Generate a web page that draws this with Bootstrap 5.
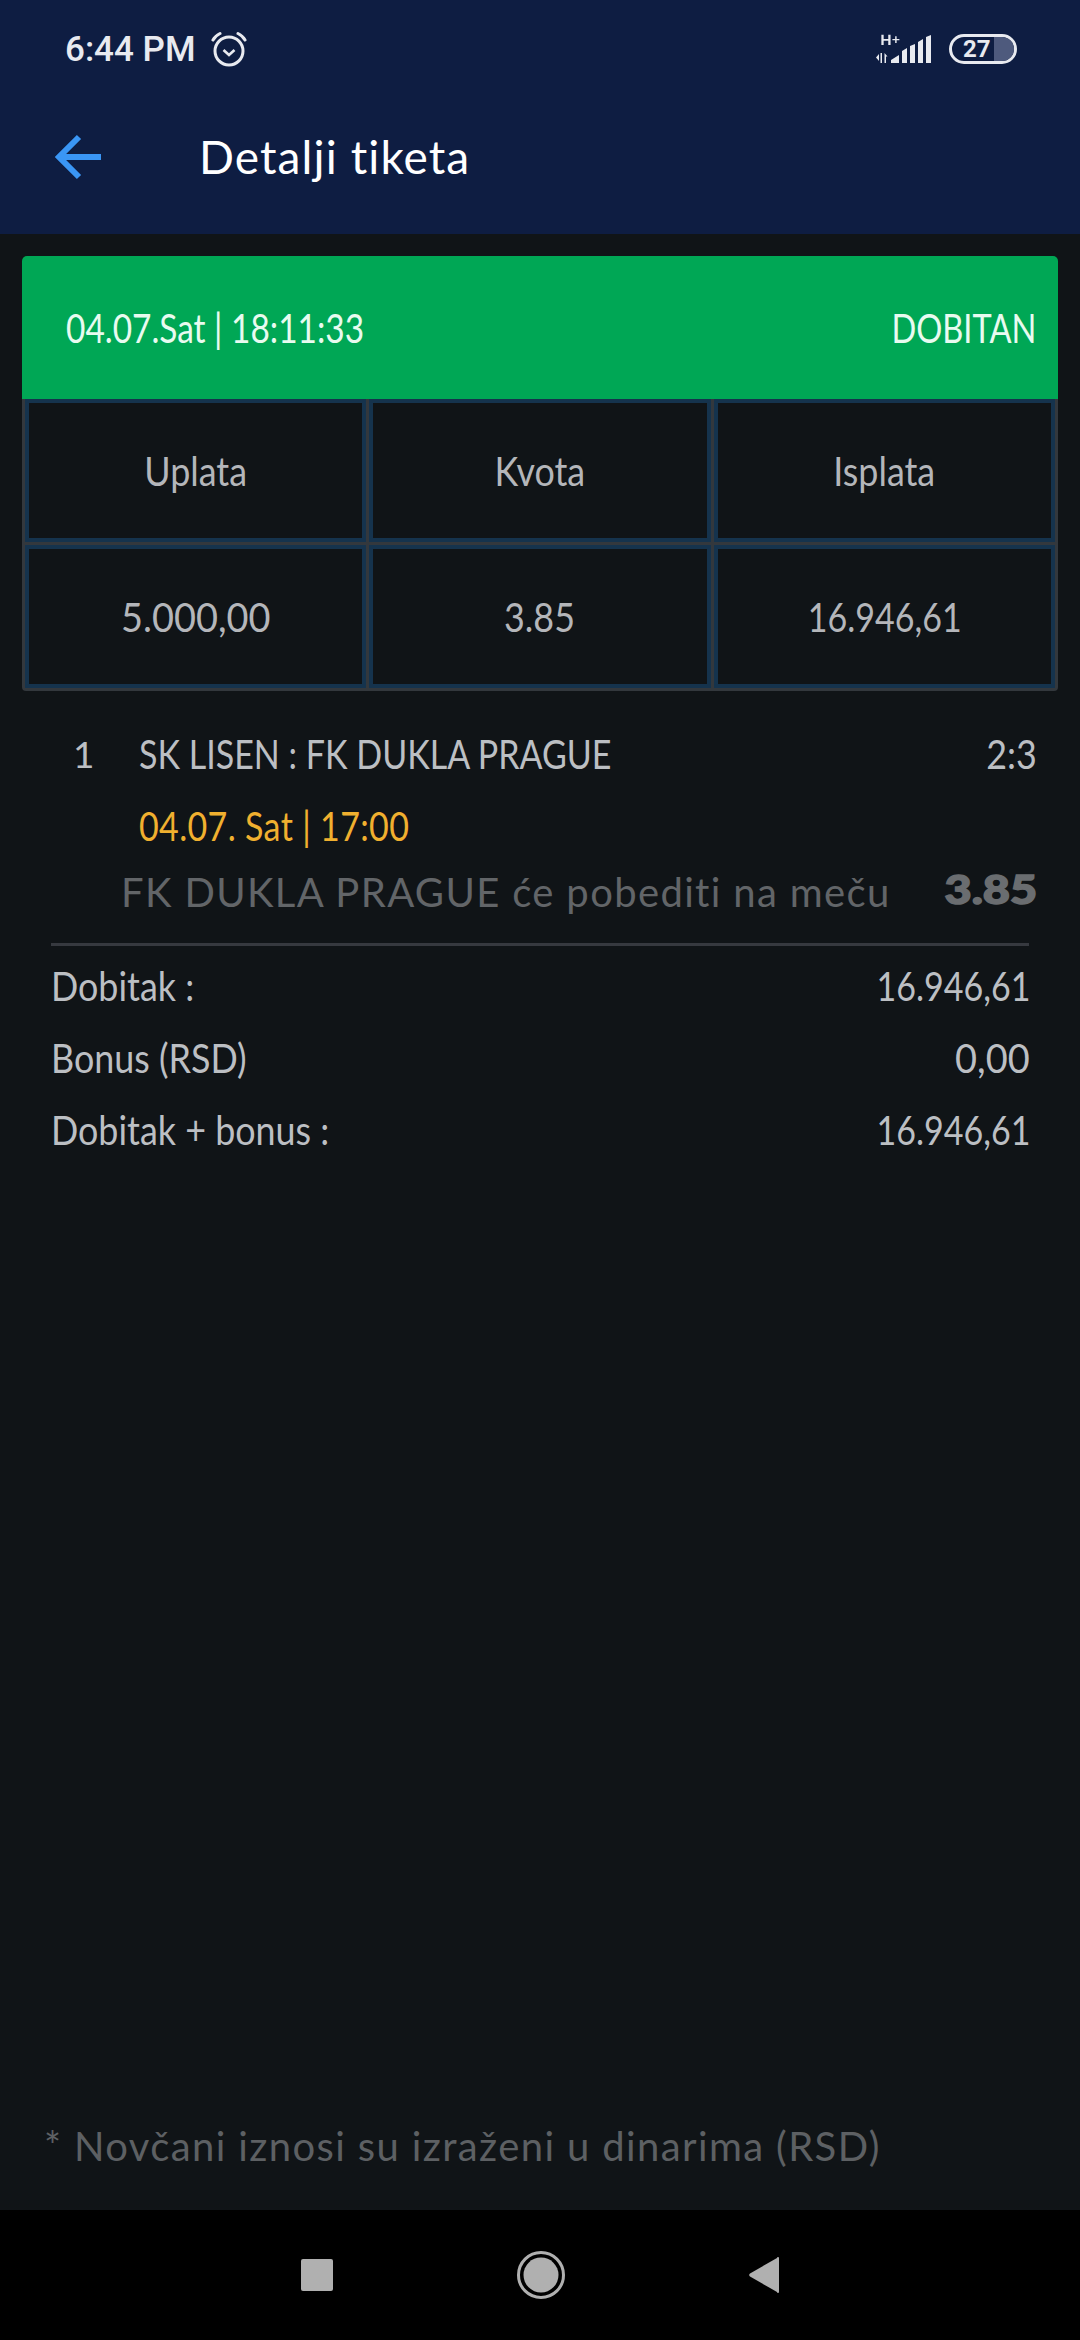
<!DOCTYPE html>
<html lang="sr">
<head>
    <meta charset="UTF-8">
    <meta name="viewport" content="width=device-width, initial-scale=1.0">
    <title>Detalji tiketa</title>
    <link rel="stylesheet" href="https://cdn.jsdelivr.net/npm/bootstrap@5.3.0/dist/css/bootstrap.min.css">
    <style>
        body {
            background: #101417;
            font-family: "Lato", "Liberation Sans", sans-serif;
            width: 1080px;
            height: 2340px;
            overflow: hidden;
        }
        .screen { height: 2340px; }
        .app-top { background: #0e1d42; height: 234px; }
        .status-row { height: 98px; padding: 0 63px 0 65px; color: #e8eaf0; }
        .status-time { font-family: "Roboto", sans-serif; font-weight: 500; font-size: 35px; line-height: 1; }
        .alarm-icon { margin-left: 15px; }
        .title-row { height: 136px; padding: 0 0 18px 55px; }
        .page-title { font-size: 46px; color: #fff; margin-left: 98px; line-height: 1; font-weight: 400; letter-spacing: 1.1px; }
        .batt {
            width: 68px; height: 30px; border: 3px solid #e8eaf0; border-radius: 15px;
            overflow: hidden; font-family: "Roboto", sans-serif; font-weight: 700; font-size: 24px;
            line-height: 24px; padding-left: 11px; margin-left: 15px; position: relative;
        }
        .batt-fill { position: absolute; top: 0; bottom: 0; right: 0; width: 20px; background: #4e5a7d; }
        .batt-num { position: relative; }

        .ticket { margin: 22px 22px 27px; }
        .ticket-head {
            background: #00a755; height: 143px; border-radius: 5px 5px 0 0;
            color: #e8fbf0; padding: 0 22px 0 44px; font-size: 41px;
        }
        .ticket-grid {
            grid-template-columns: repeat(3, 1fr); gap: 3px; padding: 0 3px 3px;
            background: #33383d; border-radius: 0 0 4px 4px;
        }
        .ticket-cell {
            height: 143px; background: #101417; border: 4px solid #15334d;
            color: #b4b6ba; font-size: 41px;
        }
        .squeeze { display: inline-block; transform: scaleX(.83); white-space: nowrap; }
        .squeeze-mid { display: inline-block; transform: scaleX(.875); white-space: nowrap; }
        .squeeze-low { display: inline-block; transform: scaleX(.925); white-space: nowrap; }
        .head-date { transform: scaleX(.815); }
        .head-state { transform: scaleX(.795); }
        .from-left { transform-origin: left center; }
        .from-right { transform-origin: right center; }

        .match-line { padding: 0 43px 0 73px; height: 72px; line-height: 72px; font-size: 41px; color: #bcbfc3; }
        .match-no { width: 66px; font-size: 37px; }
        .match-when { padding-left: 139px; height: 72px; line-height: 72px; font-size: 41px; color: #f0b02f; letter-spacing: .4px; }
        .pick-line { padding: 0 43px 0 121px; height: 60px; line-height: 60px; font-size: 40px; color: #626568; letter-spacing: 1.35px; }
        .pick-odd {
            font-weight: 900; font-size: 39px; color: #6a6d70; margin-bottom: 6px; letter-spacing: 0;
            -webkit-text-stroke: 1.5px #6a6d70; transform: scaleX(1.2); transform-origin: right center;
        }
        .rule-line { height: 3px; background: #36393f; margin: 21px 51px 4px; }
        .sum-line { padding: 0 50px 0 51px; height: 72px; line-height: 72px; font-size: 41px; color: #bcbfc3; }
        .footnote { padding: 0 0 34px 44px; line-height: 60px; font-size: 40px; color: #5d6063; letter-spacing: 1.38px; }
        .nav-keys { background: #000; height: 130px; gap: 184px; }
    </style>
</head>
<body>
<div class="screen d-flex flex-column">
    <header class="app-top">
        <div class="status-row d-flex align-items-center">
            <span class="status-time">6:44 PM</span>
            <svg class="alarm-icon" width="36" height="36" viewBox="0 0 36 36" fill="none" stroke="#e8eaf0" stroke-width="3">
                <circle cx="18" cy="20" r="14"/>
                <path d="M12.5 19l5.5 5 5.5-5" stroke-width="2.6"/>
                <path d="M2 9c1.5-3 4-5 7-6.500M34 9c-1.500-3-4-5-7-6.500" stroke-linecap="round"/>
            </svg>
            <svg class="ms-auto" width="60" height="32" viewBox="0 0 60 32" fill="#e8eaf0">
                <path d="M8 2h2.500v4.500h5V2H18v11h-2.500V8.500h-5V13H8zM20 6.500h3v-3h1.600v3h3V8h-3v3H23V8h-3z" transform="scale(.92)"/>
                <path d="M5 21v7l-3-3.500zM6.500 20h1.500v10h-1.500zM10.500 20l3 3.500h-1.500V30h-1.500z"/>
                <path d="M17 30v-3l8-5v8zM28 30V18l5-3v15zM36 30V13l5-2v19zM44 30V9l5-3v24zM52 30V4l5-2v28z"/>
            </svg>
            <div class="batt">
                <span class="batt-fill"></span>
                <span class="batt-num">27</span>
            </div>
        </div>
        <div class="title-row d-flex align-items-center">
            <svg width="46" height="46" viewBox="0 0 46 46" fill="none" stroke="#3a96f5" stroke-width="6">
                <path d="M24 3L4 23l20 20M4 23h42"/>
            </svg>
            <h1 class="page-title mb-0">Detalji tiketa</h1>
        </div>
    </header>

    <main class="flex-grow-1">
        <section class="ticket">
            <div class="ticket-head d-flex justify-content-between align-items-center">
                <span class="squeeze head-date from-left">04.07.Sat | 18:11:33</span>
                <span class="squeeze head-state from-right">DOBITAN</span>
            </div>
            <div class="ticket-grid d-grid">
                <div class="ticket-cell d-flex justify-content-center align-items-center"><span class="squeeze-mid">Uplata</span></div>
                <div class="ticket-cell d-flex justify-content-center align-items-center"><span class="squeeze-mid">Kvota</span></div>
                <div class="ticket-cell d-flex justify-content-center align-items-center"><span class="squeeze-mid">Isplata</span></div>
                <div class="ticket-cell d-flex justify-content-center align-items-center"><span class="squeeze-low">5.000,00</span></div>
                <div class="ticket-cell d-flex justify-content-center align-items-center"><span class="squeeze-mid">3.85</span></div>
                <div class="ticket-cell d-flex justify-content-center align-items-center"><span class="squeeze">16.946,61</span></div>
            </div>
        </section>

        <div class="match-line d-flex">
            <span class="match-no">1</span>
            <span class="squeeze from-left">SK LISEN : FK DUKLA PRAGUE</span>
            <span class="squeeze-mid from-right ms-auto">2:3</span>
        </div>
        <div class="match-when"><span class="squeeze from-left">04.07. Sat | 17:00</span></div>
        <div class="pick-line d-flex justify-content-between align-items-center">
            <span>FK DUKLA PRAGUE će pobediti na meču</span>
            <span class="pick-odd d-inline-block">3.85</span>
        </div>
        <div class="rule-line"></div>
        <div class="sum-line d-flex justify-content-between">
            <span class="squeeze-mid from-left">Dobitak :</span>
            <span class="squeeze from-right">16.946,61</span>
        </div>
        <div class="sum-line d-flex justify-content-between">
            <span class="squeeze-mid from-left">Bonus (RSD)</span>
            <span class="squeeze-low from-right">0,00</span>
        </div>
        <div class="sum-line d-flex justify-content-between">
            <span class="squeeze-mid from-left">Dobitak + bonus :</span>
            <span class="squeeze from-right">16.946,61</span>
        </div>
    </main>

    <div class="footnote">* Novčani iznosi su izraženi u dinarima (RSD)</div>

    <div class="nav-keys d-flex justify-content-center align-items-center">
        <svg width="32" height="32" viewBox="0 0 32 32"><rect width="32" height="32" rx="2" fill="#b0b0b0"/></svg>
        <svg width="48" height="50" viewBox="0 0 48 50"><circle cx="24" cy="25" r="22.500" fill="none" stroke="#b0b0b0" stroke-width="3"/><circle cx="24" cy="25" r="17.500" fill="#b0b0b0"/></svg>
        <svg width="30" height="36" viewBox="0 0 30 36"><path d="M30 1v34a1 1 0 0 1-2 0L1 19.500a2 2 0 0 1 0-3L28 1a1 1 0 0 1 2 0z" fill="#b0b0b0"/></svg>
    </div>
</div>
<script src="https://cdn.jsdelivr.net/npm/bootstrap@5.3.0/dist/js/bootstrap.bundle.min.js"></script>
</body>
</html>
